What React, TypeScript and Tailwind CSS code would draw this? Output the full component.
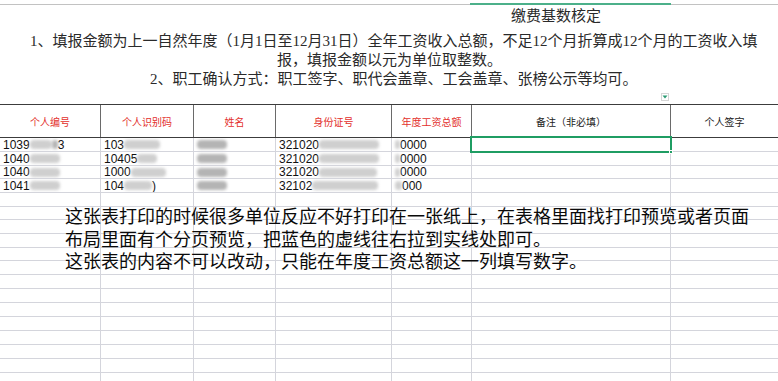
import React from "react";

const W = [101, 93, 82, 116, 80, 199, 107];
const HEAD = [
  { t: "个人编号", red: true },
  { t: "个人识别码", red: true },
  { t: "姓名", red: true },
  { t: "身份证号", red: true },
  { t: "年度工资总额", red: true },
  { t: "备注（非必填）", red: false },
  { t: "个人签字", red: false },
];

const Blob = ({ w, dark = false }: { w: number; dark?: boolean }) => (
  <span
    className={`inline-block h-[9px] rounded-sm align-middle blur-[1.5px] ${dark ? "bg-[#b4b4b4]" : "bg-[#cfcfcf]"}`}
    style={{ width: w }}
  />
);

type Cell = React.ReactNode;

const DATA: Cell[][] = [
  [
    <>1039<Blob w={22} /> <Blob w={6} dark />3</>,
    <>103<Blob w={36} /></>,
    <><Blob w={30} dark /></>,
    <>321020<Blob w={60} /></>,
    <><Blob w={5} />0000</>,
  ],
  [
    <>1040<Blob w={30} /></>,
    <>10405<Blob w={20} /></>,
    <><Blob w={30} dark /></>,
    <>321020<Blob w={60} /></>,
    <><Blob w={5} />0000</>,
  ],
  [
    <>1040<Blob w={30} /></>,
    <>1000<Blob w={35} /></>,
    <><Blob w={30} dark /></>,
    <>321020<Blob w={58} /></>,
    <><Blob w={5} />0000</>,
  ],
  [
    <>1041<Blob w={30} /></>,
    <>104<Blob w={28} />)</>,
    <><Blob w={30} dark /></>,
    <>32102<Blob w={66} /></>,
    <><Blob w={7} />000</>,
  ],
];

const ROWS = [14, 14, 13, 14, 14, 13, 14, 14, 13, 14, 14, 14, 14, 14, 14, 14, 14, 14];

const serif = { fontFamily: "'Liberation Serif', 'Noto Sans CJK SC', serif" };
const cjk = { fontFamily: "'Noto Sans CJK SC', 'Liberation Sans', sans-serif" };

export default function App() {
  return (
    <div className="relative w-[778px] h-[381px] overflow-hidden bg-white">
      {/* top area */}
      <div className="relative h-[104px]">
        <div className="absolute left-0 right-0 top-[4px] h-px bg-[#c2c2c2]" />
        <div className="absolute left-[470px] w-[201px] top-[3px] h-[2px] bg-[#4cb08a]" />
        <div className="flex flex-col text-[15px] text-[#2a2a2a]" style={serif}>
          <div className="h-[7px]" />
          <div className="h-[19px] leading-[19px] pl-[511px] whitespace-nowrap">缴费基数核定</div>
          <div className="h-[6px]" />
          <div className="h-[19px] leading-[19px] pl-[30px] whitespace-nowrap">
            1、填报金额为上一自然年度（1月1日至12月31日）全年工资收入总额，不足12个月折算成12个月的工资收入填
          </div>
          <div className="h-[18px] leading-[18px] pl-[277px] whitespace-nowrap">报，填报金额以元为单位取整数。</div>
          <div className="h-[21px] leading-[21px] pl-[150px] whitespace-nowrap">
            2、职工确认方式：职工签字、职代会盖章、工会盖章、张榜公示等均可。
          </div>
        </div>
        {/* filter dropdown */}
        <div className="absolute left-[661px] top-[93px] w-[8px] h-[8px] border border-[#d6d6d6] bg-white flex items-start justify-center">
          <svg width="6" height="4" viewBox="0 0 6 4" className="mt-[1px]">
            <path d="M0.5 0.5 L5.5 0.5 L3 3.5 Z" fill="#2a9a72" />
          </svg>
        </div>
      </div>

      {/* header row */}
      <div className="flex h-[34px] border-t border-b border-[#3c3c3c]" style={cjk}>
        {HEAD.map((h, i) => (
          <div
            key={i}
            className={`flex items-center justify-center text-[10px] ${i < 6 ? "border-r border-[#6a6a6a]" : ""} ${h.red ? "text-[#e3302c]" : "text-[#222]"}`}
            style={{ width: W[i] }}
          >
            {h.t}
          </div>
        ))}
      </div>

      {/* body rows */}
      {ROWS.map((hgt, r) => (
        <div key={r} className="flex border-b border-[#d4d5dc]" style={{ height: hgt }}>
          {W.map((w, c) => (
            <div
              key={c}
              className={`flex items-center pl-[3px] text-[12px] leading-none text-[#111] whitespace-nowrap overflow-hidden ${c < 6 ? "border-r border-[#d4d5dc]" : ""}`}
              style={{ width: w, fontFamily: "'Liberation Sans', Arial, sans-serif" }}
            >
              {r < 4 && c < 5 ? DATA[r][c] : null}
            </div>
          ))}
        </div>
      ))}

      {/* selected cell */}
      <div className="absolute left-[470px] top-[136px] w-[202px] h-[17px] border-2 border-[#1f9d63]" />
      <div className="absolute left-[669px] top-[150px] w-[4px] h-[4px] bg-[#1f9d63] border border-white" />

      {/* floating text box */}
      <div
        className="absolute left-[65px] top-[204px] text-[18px] leading-[22.5px] text-[#0a0a0a] whitespace-nowrap"
        style={cjk}
      >
        <div>这张表打印的时候很多单位反应不好打印在一张纸上，在表格里面找打印预览或者页面</div>
        <div>布局里面有个分页预览，把蓝色的虚线往右拉到实线处即可。</div>
        <div>这张表的内容不可以改动，只能在年度工资总额这一列填写数字。</div>
      </div>
    </div>
  );
}
